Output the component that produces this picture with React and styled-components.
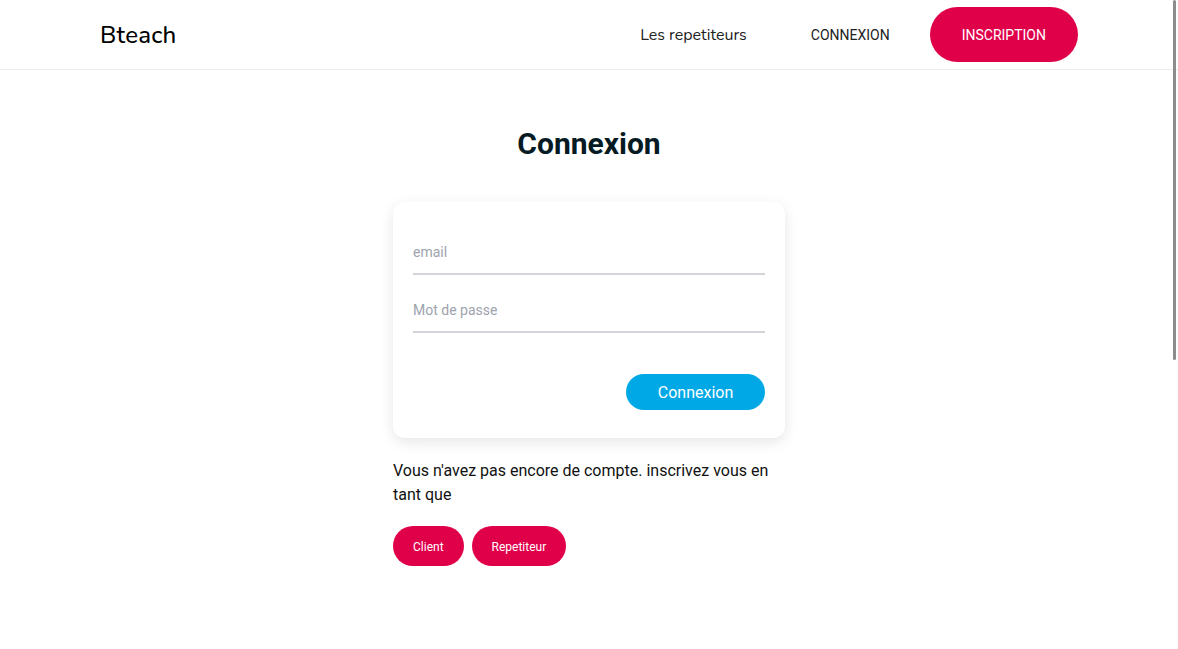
import React from "react";
import styled, { createGlobalStyle } from "styled-components";

const GlobalStyle = createGlobalStyle`
  html, body { margin: 0; padding: 0; background: #fff; }
  body { font-family: Roboto, "Liberation Sans", sans-serif; color: #111; }
  * { box-sizing: border-box; }
`;

const Page = styled.div`
  display: flex;
  flex-direction: column;
`;

const ScrollThumb = styled.div`
  position: fixed;
  top: 0;
  right: 2px;
  width: 3px;
  height: 360px;
  border-radius: 2px;
  background: #8c8c8c;
`;

const Header = styled.header`
  height: 70px;
  border-bottom: 1px solid #ececec;
  display: flex;
  align-items: center;
  justify-content: space-between;
  padding: 0 100px;
`;

const Logo = styled.div`
  font-family: Nunito, Lato, "Open Sans", sans-serif;
  font-size: 24px;
  font-weight: 500;
  color: #000;
  letter-spacing: 0.2px;
`;

const Nav = styled.nav`
  display: flex;
  align-items: center;
`;

const NavLink = styled.a`
  font-family: Nunito, Lato, "Open Sans", sans-serif;
  font-size: 16px;
  color: #222;
  padding: 1px 32px 0 0;
  text-decoration: none;
`;

const NavButton = styled.button`
  font-family: Roboto, sans-serif;
  font-size: 14px;
  text-transform: uppercase;
  border: none;
  border-radius: 28px;
  height: 55px;
  padding: 0 32px;
  margin-left: ${(p) => (p.$primary ? "8px" : "0")};
  background: ${(p) => (p.$primary ? "#e0004a" : "transparent")};
  color: ${(p) => (p.$primary ? "#fff" : "#212121")};
  cursor: pointer;
`;

const Main = styled.main`
  display: flex;
  flex-direction: column;
  align-items: center;
`;

const Title = styled.h1`
  margin: 56px 0 0;
  font-size: 30px;
  line-height: 36px;
  font-weight: 700;
  color: #061a23;
`;

const Column = styled.div`
  width: 392px;
  margin-top: 40px;
  display: flex;
  flex-direction: column;
`;

const Card = styled.form`
  background: #fff;
  border-radius: 12px;
  box-shadow: 0 4px 14px rgba(0, 0, 0, 0.1);
  padding: 29px 20px 28px;
  display: flex;
  flex-direction: column;
`;

const Field = styled.input`
  height: 44px;
  border: none;
  border-bottom: 2px solid #d4d5da;
  outline: none;
  padding: 0;
  font-family: Roboto, sans-serif;
  font-size: 14px;
  color: #333;
  background: transparent;
  margin-bottom: ${(p) => p.$gap || 0}px;
  &::placeholder { color: #9ea3ae; }
`;

const SubmitRow = styled.div`
  display: flex;
  justify-content: flex-end;
  margin-top: 41px;
`;

const SubmitButton = styled.button`
  width: 139px;
  height: 36px;
  border: none;
  border-radius: 18px;
  background: #00a9e6;
  color: #fff;
  font-family: Roboto, sans-serif;
  font-size: 16px;
  cursor: pointer;
`;

const Hint = styled.p`
  margin: 21px 0 0;
  font-size: 16px;
  line-height: 24px;
  color: #111;
`;

const ChoiceRow = styled.div`
  display: flex;
  gap: 8px;
  margin-top: 19px;
`;

const ChoiceButton = styled.button`
  height: 40px;
  padding: 2px 20px 0;
  border: none;
  border-radius: 20px;
  background: #e0004a;
  color: #fff;
  font-family: Roboto, sans-serif;
  font-size: 12px;
  cursor: pointer;
`;

export default function App() {
  return (
    <Page>
      <GlobalStyle />
      <Header>
        <Logo>Bteach</Logo>
        <Nav>
          <NavLink href="#">Les repetiteurs</NavLink>
          <NavButton>Connexion</NavButton>
          <NavButton $primary>Inscription</NavButton>
        </Nav>
      </Header>
      <Main>
        <Title>Connexion</Title>
        <Column>
          <Card onSubmit={(e) => e.preventDefault()}>
            <Field type="email" placeholder="email" $gap={14} />
            <Field type="password" placeholder="Mot de passe" />
            <SubmitRow>
              <SubmitButton type="submit">Connexion</SubmitButton>
            </SubmitRow>
          </Card>
          <Hint>Vous n'avez pas encore de compte. inscrivez vous en tant que</Hint>
          <ChoiceRow>
            <ChoiceButton>Client</ChoiceButton>
            <ChoiceButton>Repetiteur</ChoiceButton>
          </ChoiceRow>
        </Column>
      </Main>
      <ScrollThumb />
    </Page>
  );
}
